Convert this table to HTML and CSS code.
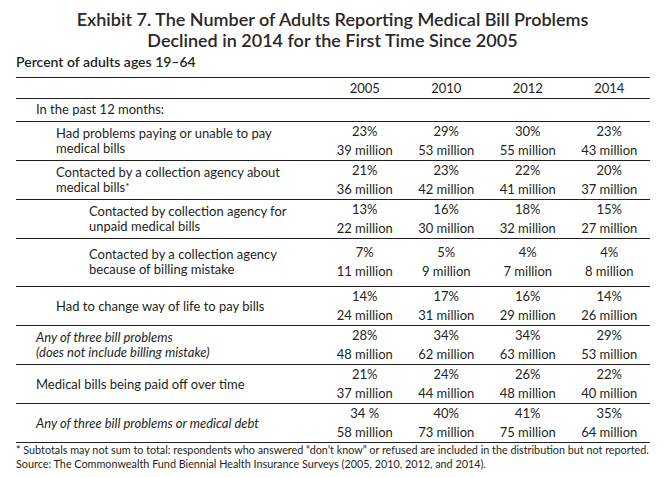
FILE: index.html
```html
<!DOCTYPE html>
<html lang="en">
<head>
<meta charset="utf-8">
<title>Exhibit 7</title>
<link rel="stylesheet" href="styles.css">
</head>
<body>
<div class="page">
  <h1 class="title">Exhibit 7. The Number of Adults Reporting Medical Bill Problems<br>Declined in 2014 for the First Time Since 2005</h1>
  <div class="subtitle">Percent of adults ages 19–64</div>
  <table class="data">
    <colgroup>
      <col class="c-label"><col class="c-num"><col class="c-num"><col class="c-num"><col class="c-num">
    </colgroup>
    <tr class="head">
      <td></td><td class="num">2005</td><td class="num">2010</td><td class="num">2012</td><td class="num">2014</td>
    </tr>
    <tr class="sub">
      <td class="lbl l1" colspan="5">In the past 12 months:</td>
    </tr>
    <tr class="r38">
      <td class="lbl l2">Had problems paying or unable to pay<br>medical bills</td>
      <td class="num">23%<br>39 million</td><td class="num">29%<br>53 million</td><td class="num">30%<br>55 million</td><td class="num">23%<br>43 million</td>
    </tr>
    <tr class="r38">
      <td class="lbl l2">Contacted by a collection agency about<br>medical bills<span class="star">*</span></td>
      <td class="num">21%<br>36 million</td><td class="num">23%<br>42 million</td><td class="num">22%<br>41 million</td><td class="num">20%<br>37 million</td>
    </tr>
    <tr class="r38">
      <td class="lbl l3">Contacted by collection agency for<br>unpaid medical bills</td>
      <td class="num">13%<br>22 million</td><td class="num">16%<br>30 million</td><td class="num">18%<br>32 million</td><td class="num">15%<br>27 million</td>
    </tr>
    <tr class="r49">
      <td class="lbl l3">Contacted by a collection agency<br>because of billing mistake</td>
      <td class="num">7%<br>11 million</td><td class="num">5%<br>9 million</td><td class="num">4%<br>7 million</td><td class="num">4%<br>8 million</td>
    </tr>
    <tr class="r38">
      <td class="lbl l2">Had to change way of life to pay bills</td>
      <td class="num">14%<br>24 million</td><td class="num">17%<br>31 million</td><td class="num">16%<br>29 million</td><td class="num">14%<br>26 million</td>
    </tr>
    <tr class="r39">
      <td class="lbl l1 it">Any of three bill problems<br>(does not include billing mistake)</td>
      <td class="num">28%<br>48 million</td><td class="num">34%<br>62 million</td><td class="num">34%<br>63 million</td><td class="num">29%<br>53 million</td>
    </tr>
    <tr class="r36">
      <td class="lbl l1">Medical bills being paid off over time</td>
      <td class="num">21%<br>37 million</td><td class="num">24%<br>44 million</td><td class="num">26%<br>48 million</td><td class="num">22%<br>40 million</td>
    </tr>
    <tr class="r39">
      <td class="lbl l1 it">Any of three bill problems or medical debt</td>
      <td class="num">34 %<br>58 million</td><td class="num">40%<br>73 million</td><td class="num">41%<br>75 million</td><td class="num">35%<br>64 million</td>
    </tr>
  </table>
  <div class="notes">
    <p>* Subtotals may not sum to total: respondents who answered “don’t know” or refused are included in the distribution but not reported.</p>
    <p>Source: The Commonwealth Fund Biennial Health Insurance Surveys (2005, 2010, 2012, and 2014).</p>
  </div>
</div>
</body>
</html>
```

FILE: styles.css
```css
html, body {
  margin: 0;
  padding: 0;
  background: #ffffff;
}

.page {
  width: 665px;
  font-family: "Lato", "Open Sans", sans-serif;
  color: #231f20;
}

.title {
  margin: 9px 0 0 0;
  font-size: 18px;
  line-height: 21px;
  font-weight: 600;
  text-align: center;
  color: #2b2728;
}

.subtitle {
  margin: 2px 0 0 16px;
  font-size: 14px;
  line-height: 18px;
  font-weight: 600;
}

.data {
  margin: 6px 0 0 16px;
  width: 634px;
  border-collapse: collapse;
  table-layout: fixed;
  border-top: 1.5px solid #231f20;
  font-size: 13px;
}

.c-label { width: 308px; }
.c-num { width: 81.5px; }

.data tr {
  border-bottom: 1.5px solid #231f20;
}

.data td {
  padding: 0;
  vertical-align: middle;
}

.num {
  text-align: center;
  line-height: 19px;
}

.lbl {
  line-height: 15px;
}

.l1 { padding-left: 20px !important; }
.l2 { padding-left: 40px !important; }
.l3 { padding-left: 73px !important; }
.it { font-style: italic; }

.star {
  font-size: 10px;
  line-height: 10px;
  vertical-align: 2px;
}

.head { height: 21px; }
.sub { height: 22.5px; }
.r36 { height: 35.5px; }
.r38 { height: 37.5px; }
.r39 { height: 38.5px; }
.r49 { height: 48.5px; }

.notes {
  margin: 0 0 0 16px;
  font-size: 10.8px;
  line-height: 14px;
}

.notes p {
  margin: 0;
}
```
